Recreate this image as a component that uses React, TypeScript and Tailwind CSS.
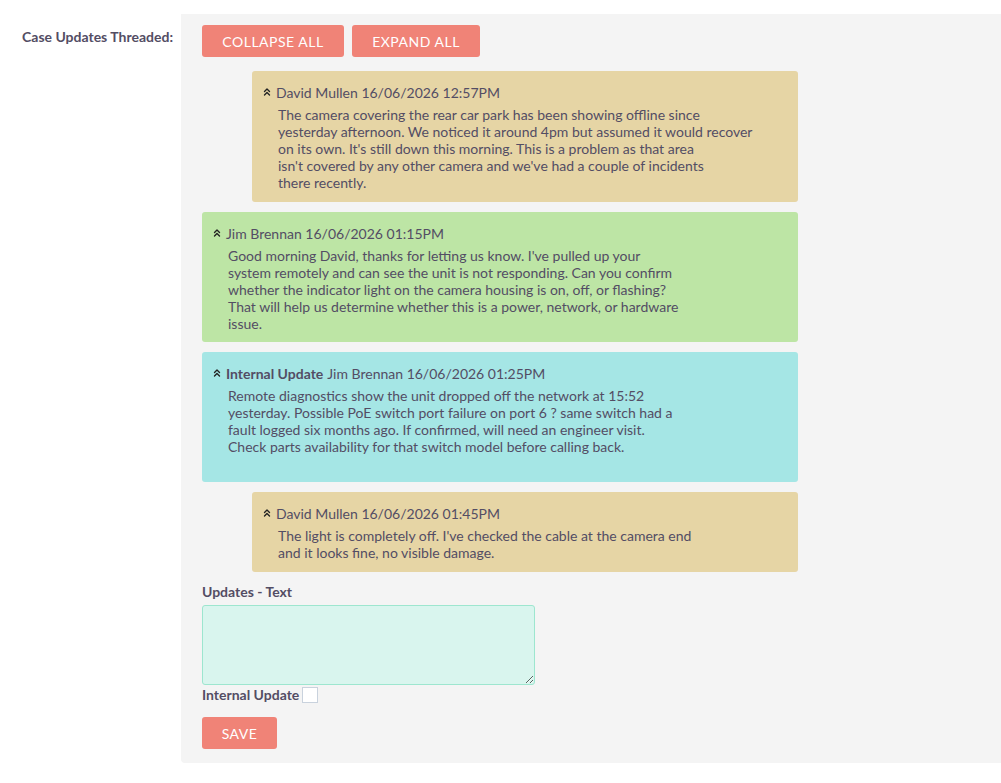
import { ChevronsUp } from 'lucide-react';

type Update = {
  author: string;
  date: string;
  internal?: boolean;
  indent: boolean;
  tone: string;
  height: string;
  lines: string[];
};

const UPDATES: Update[] = [
  {
    author: 'David Mullen',
    date: '16/06/2026 12:57PM',
    indent: true,
    tone: 'bg-[#e6d5a5]',
    height: 'h-[131px]',
    lines: [
      'The camera covering the rear car park has been showing offline since',
      'yesterday afternoon. We noticed it around 4pm but assumed it would recover',
      "on its own. It's still down this morning. This is a problem as that area",
      "isn't covered by any other camera and we've had a couple of incidents",
      'there recently.',
    ],
  },
  {
    author: 'Jim Brennan',
    date: '16/06/2026 01:15PM',
    indent: false,
    tone: 'bg-[#bde5a5]',
    height: 'h-[130px]',
    lines: [
      "Good morning David, thanks for letting us know. I've pulled up your",
      'system remotely and can see the unit is not responding. Can you confirm',
      'whether the indicator light on the camera housing is on, off, or flashing?',
      'That will help us determine whether this is a power, network, or hardware',
      'issue.',
    ],
  },
  {
    author: 'Jim Brennan',
    date: '16/06/2026 01:25PM',
    internal: true,
    indent: false,
    tone: 'bg-[#a5e6e5]',
    height: 'h-[130px]',
    lines: [
      'Remote diagnostics show the unit dropped off the network at 15:52',
      'yesterday. Possible PoE switch port failure on port 6 ? same switch had a',
      'fault logged six months ago. If confirmed, will need an engineer visit.',
      'Check parts availability for that switch model before calling back.',
    ],
  },
  {
    author: 'David Mullen',
    date: '16/06/2026 01:45PM',
    indent: true,
    tone: 'bg-[#e6d5a5]',
    height: 'h-[80px]',
    lines: [
      "The light is completely off. I've checked the cable at the camera end",
      'and it looks fine, no visible damage.',
    ],
  },
];

function ThreadItem({ u }: { u: Update }) {
  return (
    <div className={`${u.indent ? 'ml-[50px] w-[546px]' : 'w-[596px]'} ${u.tone} ${u.height} rounded-[3px] pl-[9px] pt-[12px]`}>
      <div className="flex items-center h-[18px] text-[14px]">
        <ChevronsUp className="w-[12px] h-[12px] mr-[3px] text-[#222]" strokeWidth={2.75} />
        {u.internal && <span className="font-bold mr-[4px]">Internal Update</span>}
        <span>{u.author} {u.date}</span>
      </div>
      <div className="pl-[17px] pt-[5px] text-[14px] leading-[17px]">
        {u.lines.map((l, i) => (
          <div key={i}>{l}</div>
        ))}
      </div>
    </div>
  );
}

export default function App() {
  return (
    <div className="min-h-[783px] bg-white pt-[14px] text-[#534d64]" style={{ fontFamily: 'Lato, "Open Sans", sans-serif' }}>
      <div className="flex">
        <div className="w-[181px] shrink-0 pr-[8px] pt-[12px] text-right text-[14px] font-bold">
          Case Updates Threaded:
        </div>
        <div className="flex-1 bg-[#f4f4f4] rounded-bl-[4px] pl-[21px] pt-[11px] pb-[14px]">
          <div className="flex gap-[8px]">
            <button className="h-[32px] w-[142px] rounded-[3px] bg-[#f08377] text-white text-[14px] tracking-[0.5px]">COLLAPSE ALL</button>
            <button className="h-[32px] w-[128px] rounded-[3px] bg-[#f08377] text-white text-[14px] tracking-[0.5px]">EXPAND ALL</button>
          </div>
          <div className="mt-[14px] flex flex-col gap-[10px]">
            {UPDATES.map((u, i) => (
              <ThreadItem key={i} u={u} />
            ))}
          </div>
          <div className="mt-[12px] text-[14px] font-bold leading-[16px]">Updates - Text</div>
          <textarea className="mt-[5px] block w-[333px] h-[80px] rounded-[3px] border border-[#9de6cf] bg-[#d9f5ee] outline-none" />
          <div className="flex items-center h-[17px] mt-[1px] text-[14px] font-bold leading-[17px]">
            <span>Internal Update</span>
            <span className="ml-[3px] inline-block w-[16px] h-[16px] bg-white border border-[#c9d2dd]" />
          </div>
          <button className="mt-[14px] h-[32px] w-[75px] rounded-[3px] bg-[#f08377] text-white text-[14px] tracking-[0.5px]">SAVE</button>
        </div>
      </div>
    </div>
  );
}
